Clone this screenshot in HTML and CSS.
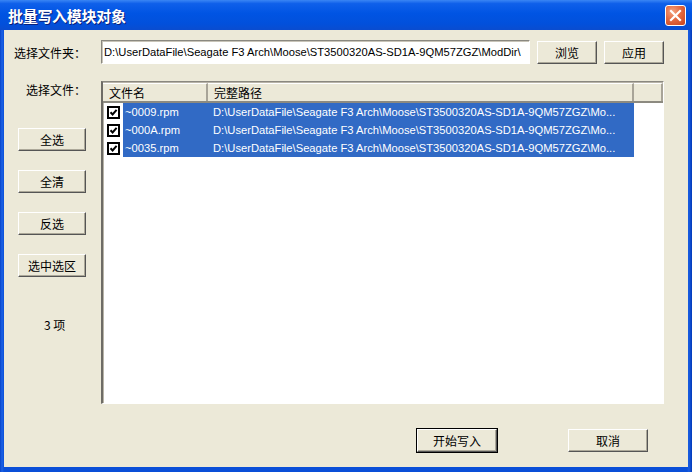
FILE: index.html
```html
<!DOCTYPE html>
<html lang="zh-CN">
<head>
	<meta charset="UTF-8">
	<title>批量写入模块对象</title>
	<link rel="stylesheet" href="styles.css">
</head>
<body>
	<div class="window">
		<div class="titlebar">
			<span class="title">批量写入模块对象</span>
			<span class="close">
				<svg width="13" height="13" viewBox="0 0 13 13"><path d="M2 2 L11 11 M11 2 L2 11" stroke="#fff" stroke-width="2.2" stroke-linecap="square"/></svg>
			</span>
		</div>
		<div class="client">
			<div class="folder_row">
				<div class="folder_label">选择文件夹：</div>
				<div class="textbox">D:\UserDataFile\Seagate F3 Arch\Moose\ST3500320AS-SD1A-9QM57ZGZ\ModDir\</div>
				<button class="btn btn_top">浏览</button>
				<button class="btn btn_top">应用</button>
			</div>
			<div class="main">
				<div class="side">
					<div class="side_label">选择文件：</div>
					<button class="btn side_btn first">全选</button>
					<button class="btn side_btn">全清</button>
					<button class="btn side_btn">反选</button>
					<button class="btn side_btn">选中选区</button>
					<div class="count">3 项</div>
				</div>
				<div class="listview">
					<div class="lv_header">
						<div class="col col_name">文件名</div>
						<div class="col col_path">完整路径</div>
						<div class="col col_rest"></div>
					</div>
					<div class="lv_row">
						<span class="check"><svg width="13" height="13" viewBox="0 0 13 13"><rect x="1" y="1" width="11" height="11" fill="#fff" stroke="#000" stroke-width="2"/><path d="M3.5 6.2 L5.6 8.4 L9.6 3.8" fill="none" stroke="#000" stroke-width="2"/></svg></span>
						<span class="sel"><span class="cell_name">~0009.rpm</span><span class="cell_path">D:\UserDataFile\Seagate F3 Arch\Moose\ST3500320AS-SD1A-9QM57ZGZ\Mo...</span></span>
					</div>
					<div class="lv_row">
						<span class="check"><svg width="13" height="13" viewBox="0 0 13 13"><rect x="1" y="1" width="11" height="11" fill="#fff" stroke="#000" stroke-width="2"/><path d="M3.5 6.2 L5.6 8.4 L9.6 3.8" fill="none" stroke="#000" stroke-width="2"/></svg></span>
						<span class="sel"><span class="cell_name">~000A.rpm</span><span class="cell_path">D:\UserDataFile\Seagate F3 Arch\Moose\ST3500320AS-SD1A-9QM57ZGZ\Mo...</span></span>
					</div>
					<div class="lv_row">
						<span class="check"><svg width="13" height="13" viewBox="0 0 13 13"><rect x="1" y="1" width="11" height="11" fill="#fff" stroke="#000" stroke-width="2"/><path d="M3.5 6.2 L5.6 8.4 L9.6 3.8" fill="none" stroke="#000" stroke-width="2"/></svg></span>
						<span class="sel"><span class="cell_name">~0035.rpm</span><span class="cell_path">D:\UserDataFile\Seagate F3 Arch\Moose\ST3500320AS-SD1A-9QM57ZGZ\Mo...</span></span>
					</div>
				</div>
			</div>
			<div class="footer">
				<button class="btn btn_bottom btn_default">开始写入</button>
				<button class="btn btn_bottom">取消</button>
			</div>
		</div>
	</div>
</body>
</html>
```
FILE: styles.css
```css
*{
	margin: 0;
	padding: 0;
	box-sizing: border-box;
}
body{
	width: 692px;
	height: 472px;
	overflow: hidden;
	background: #fff;
	font-family: "Liberation Sans", "Noto Sans CJK SC", sans-serif;
	font-size: 12px;
}
.window{
	width: 692px;
	height: 472px;
	display: flex;
	flex-direction: column;
	background: linear-gradient(90deg, #0843c8 0, #1c62e6 2px, #0a4fd8 4px, #0a4fd8 687px, #1a5de0 689px, #0038b8 692px);
}
.titlebar{
	height: 30px;
	flex: none;
	display: flex;
	align-items: center;
	justify-content: space-between;
	padding: 0 6px 0 8px;
	background: linear-gradient(180deg, #3a86f4 0, #0f60ea 12%, #0054e3 45%, #0250db 80%, #0a4ccf 100%);
}
.title{
	color: #fff;
	font-family: "Noto Sans CJK SC", sans-serif;
	font-weight: bold;
	font-size: 15px;
	letter-spacing: -0.3px;
	text-shadow: 1px 1px 0 #0a1f7a;
}
.close{
	width: 21px;
	height: 21px;
	margin-top: 1px;
	border: 1px solid #fff;
	border-radius: 3px;
	display: flex;
	align-items: center;
	justify-content: center;
	background: radial-gradient(circle at 35% 30%, #f3a482 0, #e46a42 45%, #c9421b 100%);
}
.client{
	flex: 1;
	margin: 0 4px 5px 4px;
	background: #ece9d8;
	padding: 10px 0 0 10px;
	display: flex;
	flex-direction: column;
}
.folder_row{
	display: flex;
	align-items: center;
	height: 24px;
}
.folder_label{
	width: 87px;
	flex: none;
	font-family: "Noto Sans CJK SC", sans-serif;
	font-size: 12px;
	color: #000;
}
.textbox{
	width: 429px;
	height: 24px;
	flex: none;
	background: #fff;
	border-top: 1px solid #8a8880;
	border-left: 1px solid #8a8880;
	border-bottom: 1px solid #fff;
	border-right: 1px solid #fff;
	box-shadow: inset 1px 1px 0 #c8c4b8;
	padding: 0 0 0 2px;
	line-height: 22px;
	font-size: 11.2px;
	white-space: nowrap;
	overflow: hidden;
}
.btn{
	font-family: "Noto Sans CJK SC", sans-serif;
	font-size: 12px;
	color: #000;
	background: #ece9d8;
	border-top: 1px solid #fff;
	border-left: 1px solid #fff;
	border-right: 1px solid #555;
	border-bottom: 1px solid #555;
	box-shadow: inset -1px -1px 0 #aca899;
	height: 23px;
	display: flex;
	align-items: center;
	justify-content: center;
}
.btn_top{
	width: 60px;
	margin-left: 7px;
}
.main{
	display: flex;
	margin-top: 17px;
	height: 323px;
}
.side{
	width: 87px;
	flex: none;
	display: flex;
	flex-direction: column;
}
.side_label{
	font-family: "Noto Sans CJK SC", sans-serif;
	text-align: right;
	padding-right: 15px;
	line-height: 16px;
	margin-top: 1px;
}
.side_btn{
	width: 68px;
	margin: 19px 0 0 4px;
}
.side_btn.first{
	margin-top: 30px;
}
.count{
	font-family: "Noto Sans CJK SC", sans-serif;
	margin: 40px 0 0 30px;
	line-height: 16px;
}
.listview{
	width: 563px;
	flex: none;
	background: #fff;
	border-top: 1px solid #8a8880;
	border-left: 2px solid #6e6c66;
	border-bottom: 1px solid #fff;
	border-right: 1px solid #fff;
	box-shadow: inset 1px 1px 0 #b8b4a8;
	overflow: hidden;
}
.lv_header{
	display: flex;
	height: 20px;
	margin-top: 1px;
	border-bottom: 2px solid #8c8a80;
}
.col{
	background: #ece9d8;
	border-top: 1px solid #fff;
	border-right: 2px solid #a8a498;
	font-family: "Noto Sans CJK SC", sans-serif;
	font-size: 12px;
	line-height: 17px;
	padding-left: 6px;
}
.col_name{
	width: 105px;
}
.col_path{
	width: 426px;
}
.col_rest{
	width: 29px;
}
.lv_row{
	display: flex;
	align-items: center;
	height: 18px;
	padding-left: 4px;
}
.check{
	width: 16px;
	height: 13px;
	flex: none;
}
.check svg{
	display: block;
}
.sel{
	display: flex;
	width: 511px;
	height: 18px;
	background: #316ac5;
	color: #fff;
	font-size: 11.2px;
	line-height: 18px;
	white-space: nowrap;
}
.cell_name{
	width: 90px;
	flex: none;
	padding-left: 2px;
}
.cell_path{
	overflow: hidden;
}
.footer{
	display: flex;
	justify-content: flex-end;
	gap: 71px;
	padding-right: 40px;
	margin-top: 25px;
}
.btn_bottom{
	width: 80px;
}
.btn_default{
	outline: 1px solid #000;
	outline-offset: 0;
}
```
